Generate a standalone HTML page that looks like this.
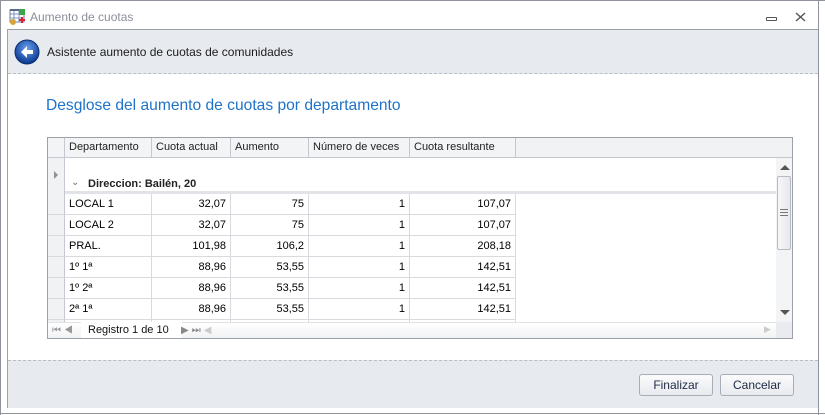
<!DOCTYPE html>
<html><head><meta charset="utf-8"><style>
*{margin:0;padding:0;box-sizing:border-box}
body{width:825px;height:415px;background:#fff;font-family:"Liberation Sans",sans-serif;font-size:11px;color:#000;position:relative;overflow:hidden}
.a{position:absolute}
.c{position:absolute;height:21px;line-height:20px;border-right:1px solid #d8dadf;border-bottom:1px solid #d8dadf;padding:0 4px;white-space:nowrap}
.r{text-align:right}
.h{position:absolute;top:0;height:20px;line-height:19px;border-right:1px solid #c4c8d0;border-bottom:1px solid #c4c8d0;padding:0 4px;background:#f3f4f6;color:#222}
.btn{position:absolute;top:374px;width:74px;height:22px;border:1px solid #a9adb5;border-radius:3px;background:linear-gradient(#fbfbfc,#e8eaee);text-align:center;line-height:20px;color:#1e2a44;font-size:12px}
</style></head><body>
<div class="a" style="left:0;top:0;width:825px;height:1px;background:#8f949c"></div>
<div class="a" style="left:0;top:0;width:1px;height:415px;background:#8f949c"></div>
<div class="a" style="left:818px;top:0;width:1px;height:415px;background:#8f949c"></div>
<div class="a" style="left:0;top:413px;width:825px;height:1px;background:#8f949c"></div>
<!-- title -->
<svg class="a" style="left:9px;top:8px" width="18" height="17" viewBox="0 0 18 17"><rect x="1" y="2" width="14" height="12" fill="#fff" stroke="#6b7fa8"/><path d="M1 6h14M1 10h14M5 2v12M10 2v12" stroke="#7f95c2"/><rect x="1" y="1" width="14" height="2" fill="#5a6a8a"/><circle cx="4" cy="14" r="3" fill="#d9a437"/><rect x="10" y="1" width="6" height="6" fill="#3ca54a"/><path d="M13 9v6M10 12h6" stroke="#d23" stroke-width="2"/></svg>
<div class="a" style="left:30px;top:10px;font-size:12px;color:#8a8f98">Aumento de cuotas</div>
<div class="a" style="left:766px;top:17px;width:11px;height:4px;border:1px solid #555;border-radius:1px"></div>
<svg class="a" style="left:795px;top:12px" width="11" height="10" viewBox="0 0 11 10"><path d="M1 1l9 8M10 1l-9 8" stroke="#555" stroke-width="1.4"/></svg>
<!-- panel -->
<div class="a" style="left:7px;top:29px;width:811px;height:379px;border:1px solid #9ca1a9;border-right:none"></div>
<div class="a" style="left:8px;top:30px;width:810px;height:44px;background:#e7eaee;border-bottom:1px dashed #b9bdc4"></div>
<svg class="a" style="left:14px;top:39px" width="26" height="26" viewBox="0 0 26 26"><defs><radialGradient id="g" cx="50%" cy="35%" r="60%"><stop offset="0" stop-color="#6aa0ee"/><stop offset="1" stop-color="#0d3c94"/></radialGradient></defs><circle cx="13" cy="13" r="12" fill="url(#g)" stroke="#0a2d6e"/><path d="M7 13l6-6v4h6v4h-6v4z" fill="#fff"/></svg>
<div class="a" style="left:47px;top:45px;font-size:12px;color:#1c1c1c">Asistente aumento de cuotas de comunidades</div>
<div class="a" style="left:46px;top:97px;font-size:15.6px;color:#1e73c8">Desglose del aumento de cuotas por departamento</div>
<!-- grid -->
<div class="a" style="left:47px;top:137px;width:746px;height:202px;border:1px solid #9ca1a9;overflow:hidden">
 <div class="a" style="left:0;top:0;width:744px;height:20px;background:#f1f2f4;border-bottom:1px solid #c4c8d0"></div>
 <div class="h" style="left:0;width:17px"></div>
 <div class="h" style="left:17px;width:87px">Departamento</div>
 <div class="h" style="left:104px;width:79px">Cuota actual</div>
 <div class="h" style="left:183px;width:78px">Aumento</div>
 <div class="h" style="left:261px;width:101px">Número de veces</div>
 <div class="h" style="left:362px;width:106px">Cuota resultante</div>
 <div class="a" style="left:0;top:20px;width:17px;height:164px;background:#f1f2f4;border-right:1px solid #c4c8d0"></div>
 <div class="a" style="left:6px;top:33px;width:0;height:0;border-left:4px solid #8a8f98;border-top:4px solid transparent;border-bottom:4px solid transparent"></div>
 <div class="a" style="left:17px;top:53px;width:711px;height:3px;background:#e1e3e6"></div>
 <div class="a" style="left:23px;top:39px;font-size:10px;color:#777">&#8964;</div>
 <div class="a" style="left:40px;top:40px;font-weight:bold;color:#222">Direccion: Bailén, 20</div>
 <div id="rows"></div>
 <!-- vscroll -->
 <div class="a" style="left:728px;top:20px;width:16px;height:164px;background:#f3f4f6"></div>
 <div class="a" style="left:732px;top:27px;width:0;height:0;border-bottom:5px solid #555;border-left:5px solid transparent;border-right:5px solid transparent"></div>
 <div class="a" style="left:729px;top:38px;width:14px;height:74px;border:1px solid #b6bac2;border-radius:2px;background:linear-gradient(90deg,#f7f7f8,#e6e8eb)"></div>
 <div class="a" style="left:732px;top:71px;width:8px;height:7px;border-top:1px solid #777;border-bottom:1px solid #777"><div style="margin-top:2px;border-top:1px solid #777"></div></div>
 <div class="a" style="left:732px;top:172px;width:0;height:0;border-top:5px solid #555;border-left:5px solid transparent;border-right:5px solid transparent"></div>
 <!-- nav -->
 <div class="a" style="left:0;top:184px;width:744px;height:17px;background:linear-gradient(#fff,#f0f1f3);border-top:1px solid #e0e2e6"></div>
 <div class="a" style="left:728px;top:184px;width:16px;height:17px;background:#e9ebee"></div>
 <div class="a" style="left:33px;top:184px;width:101px;height:17px;background:#fff"></div>
 <div class="a" style="left:4px;top:187px;font-size:10px;color:#999;letter-spacing:3px">⏮◀</div>
 <div class="a" style="left:40px;top:186px;color:#111">Registro 1 de 10</div>
 <div class="a" style="left:133px;top:187px;font-size:10px;color:#888;letter-spacing:3px">▶⏭<span style="color:#ccc">◀</span></div>
 <div class="a" style="left:716px;top:186px;font-size:9px;color:#ccc">▶</div>
</div>
<script>
var d=[["LOCAL 1","32,07","75","1","107,07"],["LOCAL 2","32,07","75","1","107,07"],["PRAL.","101,98","106,2","1","208,18"],["1º 1ª","88,96","53,55","1","142,51"],["1º 2ª","88,96","53,55","1","142,51"],["2ª 1ª","88,96","53,55","1","142,51"],["","","","",""]];
var L=[[17,87],[104,79],[183,78],[261,101],[362,106]],h="";
d.forEach(function(r,i){var t=56+i*21;h+='<div class="c" style="left:0;top:'+t+'px;width:17px;background:#f1f2f4;border-right-color:#c4c8d0"></div>';
r.forEach(function(v,j){h+='<div class="c'+(j?' r':'')+'" style="left:'+L[j][0]+'px;top:'+t+'px;width:'+L[j][1]+'px">'+v+'</div>'})});
document.getElementById('rows').outerHTML=h;
</script>
<!-- footer -->
<div class="a" style="left:8px;top:360px;width:810px;height:48px;background:#e7eaee;border-top:1px dashed #b9bdc4"></div>
<div class="btn" style="left:639px">Finalizar</div>
<div class="btn" style="left:720px">Cancelar</div>
</body></html>
